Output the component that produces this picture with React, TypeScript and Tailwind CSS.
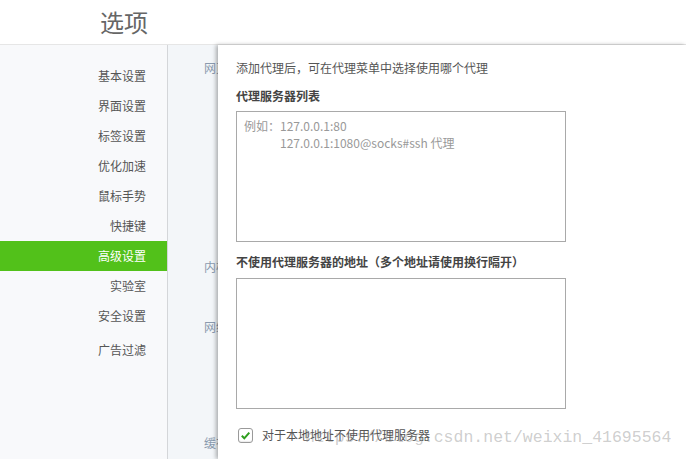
import React from "react";

const font = { fontFamily: '"Noto Sans CJK SC", "Noto Sans", sans-serif' };

const items = ["基本设置", "界面设置", "标签设置", "优化加速", "鼠标手势", "快捷键", "高级设置", "实验室", "安全设置"];

export default function App() {
  return (
    <div className="relative w-[686px] h-[459px] overflow-hidden bg-white" style={font}>
      <div className="h-[45px] border-b border-[#e6e6e6] flex items-center pl-[100px]">
        <span className="text-[24px] leading-none text-[#666]">选项</span>
      </div>
      <div className="flex h-[414px]">
        <div className="w-[168px] shrink-0 bg-[#f8f9fb] border-r border-[#d4d6d9] pt-[16px]">
          {items.map((t) => (
            <div
              key={t}
              className={
                "h-[30px] flex items-center justify-end pr-[21px] text-[12px] " +
                (t === "高级设置" ? "bg-[#52c11a] text-white" : "text-[#555]")
              }
            >
              {t}
            </div>
          ))}
          <div className="h-[30px] mt-[4px] flex items-center justify-end pr-[21px] text-[12px] text-[#555]">广告过滤</div>
        </div>
        <div className="relative flex-1 bg-[#f3f6f9]">
          <div className="flex flex-col pl-[36px] text-[12px] text-[#8a9aae] leading-[20px]">
            <div className="mt-[13px]">网页</div>
            <div className="mt-[179px]">内核</div>
            <div className="mt-[40px]">网络</div>
            <div className="mt-[96px]">缓存</div>
          </div>
          <div className="absolute left-[50px] top-0 bottom-0 right-0 bg-white shadow-[-2px_0_4px_rgba(0,0,0,0.3)] pl-[18px] pt-[13px]">
            <div className="text-[12px] leading-[20px] text-[#555]">添加代理后，可在代理菜单中选择使用哪个代理</div>
            <div className="mt-[8px] text-[12px] leading-[20px] font-bold text-[#444]">代理服务器列表</div>
            <div className="mt-[5px] w-[330px] h-[131px] border border-[#a9a9a9] pl-[7px] pt-[5px] text-[12px] leading-[17px] text-[#999]">
              <div>例如：127.0.0.1:80</div>
              <div className="pl-[36px]">127.0.0.1:1080@socks#ssh 代理</div>
            </div>
            <div className="mt-[10px] text-[12px] leading-[20px] font-bold text-[#444]">不使用代理服务器的地址（多个地址请使用换行隔开）</div>
            <div className="mt-[6px] w-[330px] h-[131px] border border-[#a9a9a9]"></div>
            <div className="mt-[16px] flex items-center pl-[2px]">
              <div className="w-[15px] h-[15px] rounded-[3px] border border-[#9a9a9a] bg-white flex items-center justify-center shadow-[inset_0_-1px_1px_rgba(0,0,0,0.08)]">
                <svg width="11" height="11" viewBox="0 0 11 11">
                  <path d="M1.8 5.8 L4.3 8.3 L9.3 2.6" fill="none" stroke="#2e9e1e" strokeWidth="2" />
                </svg>
              </div>
              <span className="ml-[9px] text-[12px] leading-[20px] text-[#555]">对于本地地址不使用代理服务器</span>
            </div>
          </div>
        </div>
      </div>
      <div
        className="absolute z-10 left-[305px] top-[427px] text-[16.5px] leading-[22px] text-[rgba(130,130,130,0.4)] whitespace-nowrap pointer-events-none"
        style={{ fontFamily: '"Liberation Mono", monospace' }}
      >
        https://blog.csdn.net/weixin_41695564
      </div>
    </div>
  );
}
